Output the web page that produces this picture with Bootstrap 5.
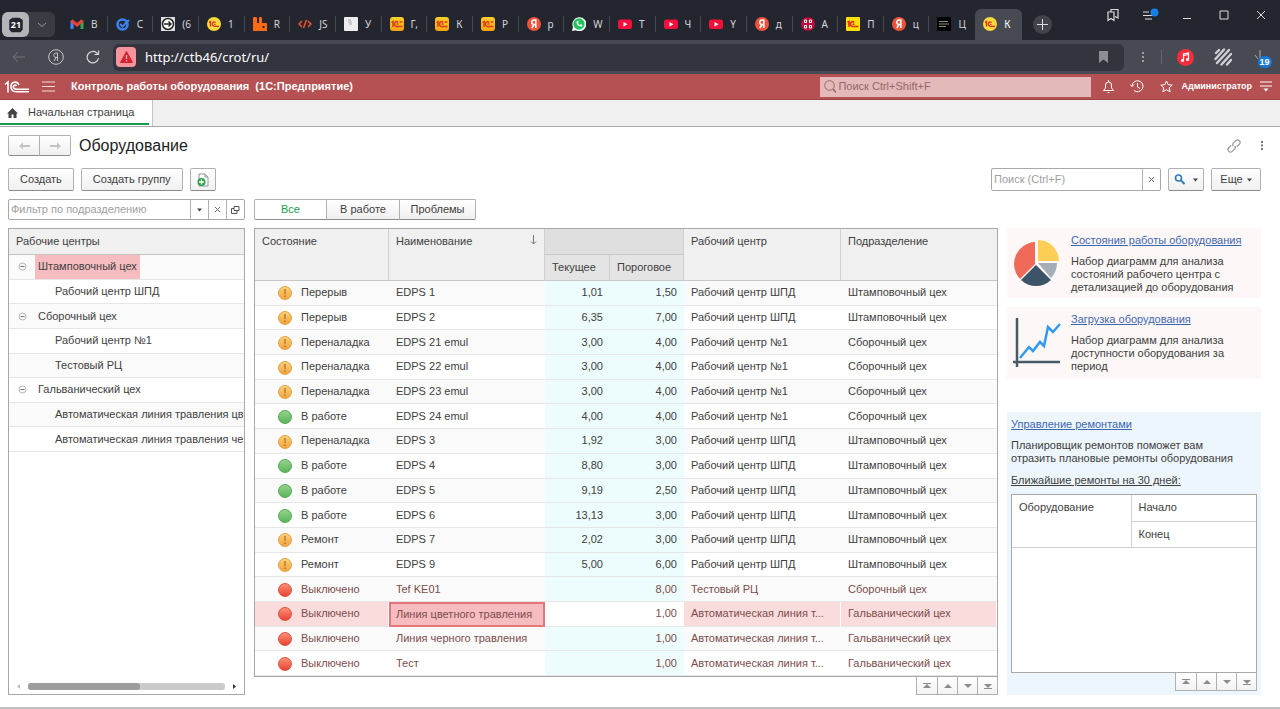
<!DOCTYPE html>
<html lang="ru">
<head>
<meta charset="utf-8">
<meta name="viewport" content="width=device-width, initial-scale=1">
<title>Контроль работы оборудования</title>
<link href="https://cdn.jsdelivr.net/npm/bootstrap@5.3.0/dist/css/bootstrap.min.css" rel="stylesheet">
<style>
body{font-family:"Liberation Sans",Arial,sans-serif;font-size:11px;line-height:13px;color:#404040;background:#fff}
button,input{font:inherit;color:inherit}
svg{display:block;flex:none}
.plain{background:none;border:0;padding:0;display:flex;align-items:center;justify-content:center}
/* browser chrome */
.strip{background:#24262f;height:40px;color:#d5d6da;font-family:"Noto Sans",sans-serif;font-size:10px}
.counter{background:#3a3b43;border-radius:6px;width:53px;height:25px;margin:12px 7px 0 2px}
.counter-num{background:#b4b5b8;border-radius:6px;width:27px;height:25px}
.b-tab{flex:1 1 0;min-width:0;height:16px;margin-top:16px;padding-left:8px;gap:7px;border-right:1px solid #484a53;color:#d5d6da;text-decoration:none}
.b-tab:nth-last-child(2){border-color:transparent}
.b-tab span{white-space:nowrap}
.b-tab.current{flex:0 0 47px;height:31px;margin-top:9px;padding:0 0 1px 8px;background:#484a53;border:0;border-radius:6px 6px 0 0;color:#fff}
.plus{width:19px;height:19px;border-radius:50%;background:#42444c;margin:15px 0 0 11px}
.win{width:186px;margin-left:42px;height:30px}
.win .plain{width:37px}
.addr{background:#484a53;height:34px;padding-right:2px}
.nav-ic{width:37px;height:34px}
.url{background:#33343e;border-radius:6px;height:27px;margin-left:2px;padding-left:3px;color:#fff}
.url input{background:none;border:0;outline:0;color:#fff;padding:0 0 0 9px;font:13px "Noto Sans",sans-serif}
.danger{width:20px;height:20px;border-radius:4px;background:#f5949c}
.dl{position:relative}
.dl b{position:absolute;left:4px;top:6px;background:#1677d8;color:#fff;border-radius:8px;font-size:9px;line-height:12px;padding:0 2px}
/* application header */
.app{background:#b55152;border-bottom:1px solid #9b4546;height:26px;color:#fff}
.user{font-size:9px}
.app-find{background:#e4b9ba;width:271px;height:20px;color:#94686a}
.app-find input{background:none;border:0;outline:0;width:220px;padding:0 0 0 2px}
.app-find input::placeholder{color:#94686a}
.tabs{background:#f0f0f0;border-bottom:1px solid #a8a8a8;height:27px}
.home-tab{background:#fff;border-right:1px solid #c4c4c4;padding-right:3px}
.home-tab a{color:#404040;text-decoration:none;border-bottom:2px solid #179a4c;height:25px;width:149px;padding:2px 0 0 7px;gap:10px}
/* form */
.form{padding:8px 19px 12px 8px}
.btn-1c{--bs-btn-font-size:11px;--bs-btn-line-height:13px;--bs-btn-padding-y:0;--bs-btn-padding-x:11px;--bs-btn-border-radius:2px;--bs-btn-color:#404040;--bs-btn-border-color:#b0b0b0;height:23px;background:linear-gradient(#fff,#f0f0f0);border-bottom-color:#8c8c8c;display:inline-flex;align-items:center;justify-content:center}
.arrows .btn-1c{width:32px;height:21px}
.tools{gap:7px}
.tools .w-add{width:26px}.tools .w-find{width:36px}.tools .w-more{width:50px}.tools .w-search{width:170px}
h1{font-size:16px;line-height:20px;color:#222;margin:0}
.dots{margin-left:18px;margin-right:-4px}
.field{border:1px solid #a8a8a8;border-radius:2px;background:#fff}
.field input{border:0;outline:0;padding:0 0 0 2px;min-width:0;flex:1;background:none}
.field input::placeholder{color:#a0a0a0}
.field .plain{border-left:1px solid #b0b0b0;width:18px}
.cols{display:grid;grid-template-columns:237px minmax(0,1fr) 254px;column-gap:9px}
.seg .btn-1c{height:21px;width:74px;padding:0}
.seg .btn-1c:first-child{width:73px}
.seg .btn-1c:last-child{width:77px}
.seg .btn-1c.on{background:#fff;color:#179a4c}
.frame{border:1px solid #a8a8a8;background:#fff}
.tree{margin:0;padding:0;list-style:none;display:grid;grid-template-rows:repeat(8,1fr);height:197px}
.tree li{display:flex;align-items:center;border-bottom:1px solid #e6e6e6;white-space:nowrap;overflow:hidden;padding-left:46px}
.tree li.group{padding-left:9px;gap:8px}
.tree li:nth-child(odd){background:#fafafa}
.tree .picked{background:#f7bcbf;align-self:stretch;display:flex;align-items:center}
.tree .group span{padding:0 3px}
.tree-head{background:#f0f0f0;border-bottom:1px solid #c4c4c4;height:26px;padding:6px 7px}
.track{height:7px;border-radius:3px;background:#cbcbcb}
.thumb{height:7px;width:57%;border-radius:3px;background:#9d9d9d}
.grid-data{width:100%;table-layout:fixed;border-collapse:separate;border-spacing:0;flex:1}
.c-state{width:134px}.c-name{width:156px}.c-now{width:65px}.c-limit{width:74px}.c-center{width:157px}
.grid-data th{font-weight:400;background:#f0f0f0;border-right:1px solid #d0d0d0;border-bottom:1px solid #c8c8c8;padding:6px 7px;vertical-align:top;height:26px}
.grid-data th:last-child{border-right:0}
.grid-data th.sub{background:#e4e4e4;padding:6px 7px}
.grid-data tr+tr th.sub:last-child{border-right:1px solid #d0d0d0}
.grid-data th.sum{background:#dfdfdf}
.grid-data td{border-bottom:1px solid #e6e6e6;padding:0 7px;height:24px;white-space:nowrap;overflow:hidden}
.grid-data tbody tr:nth-child(odd) td{background:#fafafa}
.grid-data td.num,.grid-data tbody tr:nth-child(odd) td.num{background:#edfdfd;text-align:right}
.grid-data .off td{color:#7c4c4c}
.grid-data tbody tr.sel td{background:#fbdcdd;border-right:1px solid #fff}
.grid-data tbody tr.sel td.num{background:#fff;border-right:0}
.grid-data tbody tr.sel td.cell{background:#f7bcbf;border:2px solid #e27679;padding:0 5px}
.lamp{display:inline-block;width:14px;height:14px;border-radius:50%;margin:-2px 9px -2px 16px;vertical-align:middle;text-align:center;font-weight:700;font-size:10px;line-height:13px;border:1px solid}
.warn{background:linear-gradient(#fcd077,#f2a33c);border-color:#e0a04a;color:#b8742a}
.good{background:linear-gradient(#94d28b,#5bb659);border-color:#55a554}
.bad{background:linear-gradient(#fb9078,#ea4430);border-color:#d45544}
.pager{height:18px}
.pager .plain{width:20px;background:linear-gradient(#fff,#f2f2f2);border:1px solid #b0b0b0;border-top:0;border-left:0}
.pager .plain:first-child{border-left:1px solid #b0b0b0;width:22px}
.tile{background:#fdf8f7;color:#404040}
.tile a,.repair a{color:#3d66b0}
.tile-a{height:70px;padding:6px}
.tile-b{height:72px;padding:6px;margin-top:9px}
.tile p{margin:8px 0 0}
.tile div{padding-left:9px}
.repair{background:#edf6fd;margin-top:33px;padding:6px 4px 4px}
.repair p{margin:8px 16px 9px 0}
.repair u{margin-bottom:7px}
.mini{width:100%;table-layout:fixed}
.mini .c-what{width:119px}
.mini th{font-weight:400;padding:6px 7px;vertical-align:top;border-bottom:1px solid #d0d0d0;height:26px}
.mini th+th,.mini tr+tr th{border-left:1px solid #d0d0d0}
.under{background:#c0c0c0;height:2px}
</style>
</head>
<body class="min-vh-100 d-flex flex-column">
<svg width="0" height="0" class="position-absolute" aria-hidden="true">
<defs><linearGradient id="gold" x2="0" y2="1"><stop stop-color="#fdd02a"/><stop offset="1" stop-color="#f8a313"/></linearGradient></defs>
<symbol id="onec" viewBox="0 0 14 14"><rect width="14" height="14" rx="3" fill="url(#gold)"/><path d="M1.500 5.500l1.500-1v5.500M8 5.500C7 4 4.500 4.500 4.500 7s2 3 3.500 2.500h4.500M8.500 7H6.500M9.500 5h3" fill="none" stroke="#d6401c" stroke-width="1.500"/></symbol>
<symbol id="onec-round" viewBox="0 0 14 14"><circle cx="7" cy="7" r="7" fill="#ffd83a"/><path d="M2 5.500l1.500-1v5M8.300 5.800C7.500 4.300 5.300 4.800 5.300 7s1.700 2.400 3 2.300h3.700M8.500 7.400H7.200" fill="none" stroke="#d6301c" stroke-width="1.300"/></symbol>
<symbol id="ya" viewBox="0 0 14 14"><circle cx="7" cy="7" r="7" fill="#f0533b"/><path d="M8.800 11V3H7.200C3.800 3 4 7.500 7.300 7.500h1.500M7 7.500L4.800 11" fill="none" stroke="#fff" stroke-width="1.500"/></symbol>
<symbol id="yt" viewBox="0 0 14 14"><rect y="2.500" width="14" height="9.500" rx="2.500" fill="#f5103c"/><path d="M5.500 5v4.500l4-2.250z" fill="#fff"/></symbol>
<symbol id="minus" viewBox="0 0 9 9"><circle cx="4.500" cy="4.500" r="3.500" fill="none" stroke="#b4b4b4"/><path d="M2.500 4.500h4" stroke="#777"/></symbol>
<symbol id="p-first" viewBox="0 0 10 8"><path d="M1 1h8v1H1zM5 2l4 4H1z" fill="#8c8c8c"/></symbol>
<symbol id="p-up" viewBox="0 0 10 8"><path d="M5 2l4 4H1z" fill="#8c8c8c"/></symbol>
<symbol id="p-down" viewBox="0 0 10 8"><path d="M5 6l4-4H1z" fill="#8c8c8c"/></symbol>
<symbol id="p-last" viewBox="0 0 10 8"><path d="M5 6l4-4H1zM1 6h8v1H1z" fill="#8c8c8c"/></symbol>
<symbol id="caret" viewBox="0 0 5 4"><path d="M0 .5h5L2.500 3.500z" fill="#444"/></symbol>
</svg>

<header>
<div class="strip d-flex">
<div class="counter d-flex">
<button class="plain counter-num" aria-label="Вкладки"><svg width="18" height="18" viewBox="0 0 16 16"><path d="M5 1.500h6l3 2V12l-2 2.500H4L2 12V3.500z" fill="#24262f"/><text x="8" y="11" text-anchor="middle" font-family="Noto Sans" font-size="8" font-weight="700" fill="#fff">21</text></svg></button>
<button class="plain flex-fill" aria-label="Список вкладок"><svg width="10" height="6" viewBox="0 0 10 6"><path d="M1 1l4 3.500L9 1" fill="none" stroke="#999ba2"/></svg></button>
</div>
<nav class="d-flex flex-fill">
<a href="#" class="b-tab d-flex align-items-center"><svg width="14" height="14" viewBox="0 0 14 14"><path d="M2 12V3.500" stroke="#4285f4" stroke-width="3"/><path d="M12 12V3.500" stroke="#34a853" stroke-width="3"/><path d="M1.500 3.500L7 8l5.500-4.500" fill="none" stroke="#ea4335" stroke-width="3"/></svg><span>В</span></a>
<a href="#" class="b-tab d-flex align-items-center"><svg width="14" height="14" viewBox="0 0 14 14"><circle cx="6.500" cy="7.500" r="5" fill="none" stroke="#3b82f0" stroke-width="2.500"/><path d="M4 7l2.500 2.500L13 3" fill="none" stroke="#3b82f0" stroke-width="2"/></svg><span>С</span></a>
<a href="#" class="b-tab d-flex align-items-center"><svg width="14" height="14" viewBox="0 0 14 14"><rect width="14" height="14" fill="#ddd"/><circle cx="7" cy="7" r="5.500" fill="#fff" stroke="#222" stroke-width="1.500"/><path d="M3 7h7M7.500 4.500L10 7 7.500 9.500" fill="none" stroke="#222" stroke-width="1.400"/></svg><span>(6</span></a>
<a href="#" class="b-tab d-flex align-items-center"><svg width="14" height="14"><use href="#onec-round"/></svg><span>1</span></a>
<a href="#" class="b-tab d-flex align-items-center"><svg width="14" height="14" viewBox="0 0 14 14"><path d="M0 14V1q0-1 1-1h2q1 0 1 1v5h2V1q0-1 1-1h1q1 0 1 1v5h4q1 0 1 1v7z" fill="#ff6a13"/><path d="M9.500 9h2v2h-2z" fill="#24262f"/></svg><span>R</span></a>
<a href="#" class="b-tab d-flex align-items-center"><svg width="14" height="14" viewBox="0 0 14 14"><path d="M4 4L1 7l3 3M10 4l3 3-3 3M8.500 3l-3 8" fill="none" stroke="#f0532d" stroke-width="1.500"/></svg><span>JS</span></a>
<a href="#" class="b-tab d-flex align-items-center"><svg width="14" height="14" viewBox="0 0 14 14"><rect width="14" height="14" rx="1" fill="#eee"/><path d="M4 3h3M4 5h4M5 7h3" stroke="#aaa"/></svg><span>У</span></a>
<a href="#" class="b-tab d-flex align-items-center"><svg width="14" height="14"><use href="#onec"/></svg><span>Г,</span></a>
<a href="#" class="b-tab d-flex align-items-center"><svg width="14" height="14"><use href="#onec"/></svg><span>К</span></a>
<a href="#" class="b-tab d-flex align-items-center"><svg width="14" height="14"><use href="#onec"/></svg><span>Р</span></a>
<a href="#" class="b-tab d-flex align-items-center"><svg width="14" height="14"><use href="#ya"/></svg><span>р</span></a>
<a href="#" class="b-tab d-flex align-items-center"><svg width="14" height="14" viewBox="0 0 14 14"><path d="M0 14l1-4A7 7 0 1 1 4 13.300z" fill="#fff"/><circle cx="7" cy="7" r="5.700" fill="#22c35e"/><path d="M4.500 4.500q0 5 5.500 5l.5-1.500-1.500-.8-1 .8Q6.500 7.500 6 6l.7-1L6 3.500z" fill="#fff"/></svg><span>W</span></a>
<a href="#" class="b-tab d-flex align-items-center"><svg width="14" height="14"><use href="#yt"/></svg><span>Т</span></a>
<a href="#" class="b-tab d-flex align-items-center"><svg width="14" height="14"><use href="#yt"/></svg><span>Ч</span></a>
<a href="#" class="b-tab d-flex align-items-center"><svg width="14" height="14"><use href="#yt"/></svg><span>Y</span></a>
<a href="#" class="b-tab d-flex align-items-center"><svg width="14" height="14"><use href="#ya"/></svg><span>д</span></a>
<a href="#" class="b-tab d-flex align-items-center"><svg width="14" height="14" viewBox="0 0 14 14"><circle cx="7" cy="7" r="7" fill="#b80f3c"/><path d="M3.500 3h2v2.500h-2zM8.500 3h2v2.500h-2zM3.500 8.500h2V11h-2zM8.500 8.500h2V11h-2z" fill="none" stroke="#fff"/></svg><span>А</span></a>
<a href="#" class="b-tab d-flex align-items-center"><svg width="14" height="14" viewBox="0 0 14 14"><rect width="14" height="14" rx="1" fill="#ffe000"/><path d="M1.500 5.500l1.500-1v5.500M8 5.500C7 4 4.500 4.500 4.500 7s2 2.600 3.500 2.500h4.500M8.500 7.200H6.500" fill="none" stroke="#e0301c" stroke-width="1.600"/></svg><span>П</span></a>
<a href="#" class="b-tab d-flex align-items-center"><svg width="14" height="14"><use href="#ya"/></svg><span>ц</span></a>
<a href="#" class="b-tab d-flex align-items-center"><svg width="14" height="14" viewBox="0 0 14 14"><rect width="14" height="14" fill="#000"/><path d="M2 4.500h9M2 7h10M2 9.500h7" stroke="#8b8f80"/></svg><span>Ц</span></a>
<a href="#" class="b-tab current d-flex align-items-center"><svg width="14" height="14"><use href="#onec-round"/></svg><span>К</span></a>
</nav>
<button class="plain plus" aria-label="Новая вкладка"><svg width="11" height="11" viewBox="0 0 11 11"><path d="M5.500 0v11M0 5.500h11" stroke="#ddd"/></svg></button>
<div class="win d-flex">
<button class="plain" aria-label="Коллекции"><svg width="12" height="14" viewBox="0 0 12 14"><path d="M1 4h6v8.500L4 10.500 1 12.500zM4 4V1.500h7V10L8 8.500" fill="none" stroke="#ddd" stroke-width="1.200"/></svg></button>
<button class="plain" aria-label="Меню"><svg width="18" height="14" viewBox="0 0 18 14"><path d="M2 4h6M2 7.500h10M4 11h7" stroke="#ddd"/><circle cx="13.500" cy="4.500" r="4" fill="#1480e8"/></svg></button>
<button class="plain" aria-label="Свернуть"><svg width="10" height="12"><path d="M1 9.500h8" stroke="#ddd"/></svg></button>
<button class="plain" aria-label="Развернуть"><svg width="10" height="10"><path d="M1 1h8v8H1z" fill="none" stroke="#ddd"/></svg></button>
<button class="plain" aria-label="Закрыть"><svg width="10" height="10"><path d="M1 1l8 8M9 1L1 9" stroke="#ddd"/></svg></button>
</div>
</div>
<div class="addr d-flex align-items-center">
<button class="plain nav-ic" aria-label="Назад"><svg width="13" height="12" viewBox="0 0 13 12"><path d="M13 6H1M6 1L1 6l5 5" fill="none" stroke="#73757c"/></svg></button>
<button class="plain nav-ic" aria-label="Яндекс"><svg width="16" height="16" viewBox="0 0 16 16"><circle cx="8" cy="8" r="7.300" fill="none" stroke="#c8c9cc"/><path d="M9.500 12V4H8C5 4 5 8.500 8 8.500h1.500M8 8.500L6 12" fill="none" stroke="#c8c9cc"/></svg></button>
<button class="plain nav-ic" aria-label="Обновить"><svg width="14" height="14" viewBox="0 0 14 14"><path d="M12.500 8A5.700 5.700 0 1 1 10.500 2.800l1.500 1.500M12.500 .5v4h-4" fill="none" stroke="#d5d6da" stroke-width="1.200"/></svg></button>
<div class="url d-flex align-items-center flex-fill">
<span class="danger d-flex align-items-center justify-content-center"><svg width="13" height="12" viewBox="0 0 13 12"><path d="M6.500 0.500L12.500 11.500H.5z" fill="#d8202f" stroke="#d8202f" stroke-linejoin="round"/><path d="M6.500 4v4M6.500 9v1.500" stroke="#f5b4ba" stroke-width="1.300"/></svg></span>
<input class="flex-fill" aria-label="Адрес" value="http://ctb46/crot/ru/">
<svg class="me-3" width="9" height="12"><path d="M0 0h9v12L4.500 8.500 0 12z" fill="#8c8d94"/></svg>
</div>
<button class="plain nav-ic" aria-label="Ещё"><svg width="3" height="12"><path d="M1 1h2v2H1zM1 5h2v2H1zM1 9h2v2H1z" fill="#9c9da3"/></svg></button>
<svg width="2" height="14"><path d="M.5 0v14" stroke="#666870"/></svg>
<button class="plain nav-ic ms-1" aria-label="Музыка"><svg width="17" height="17" viewBox="0 0 17 17"><circle cx="8.500" cy="8.500" r="8.500" fill="#fa2d3c"/><path d="M6.500 11.500V5l5-1v6.500M6.500 6.500l5-1" fill="none" stroke="#fff" stroke-width="1.200"/><circle cx="5.500" cy="11.500" r="1.500" fill="#fff"/><circle cx="10.500" cy="10.500" r="1.500" fill="#fff"/></svg></button>
<button class="plain nav-ic" aria-label="Расширение"><svg width="18" height="18" viewBox="0 0 18 18"><path d="M2 5l3-3M1.500 11L10 1.500M3 15L15 2M7.500 16.500L17 6M13 16.500l4-4.500" stroke="#d0d1d4" stroke-width="2.400" stroke-linecap="round"/></svg></button>
<button class="plain nav-ic" aria-label="Загрузки"><span class="dl"><svg width="12" height="14"><path d="M6 0v8M1 5l3 4" stroke="#aaa" fill="none"/></svg><b>19</b></span></button>
</div>
<div class="app d-flex align-items-center">
<svg class="ms-1" width="26" height="14" viewBox="0 0 26 14"><path d="M1 4.500l3-2.500V12.500M15 5C13 .5 7 1.500 7 6.500s4 5.500 7 5.200h11M12.500 6c-1-1.500-3.200-1-3.200 .8s2 2.500 4.200 2.400H25" fill="none" stroke="#fff" stroke-width="1.600"/></svg>
<button class="plain mx-2 px-1" aria-label="Главное меню"><svg width="13" height="11"><path d="M0 1h13M0 5.500h13M0 10h13" stroke="#f4dcdc" stroke-width="1.200"/></svg></button>
<strong class="flex-fill ps-1">Контроль работы оборудования &nbsp;(1С:Предприятие)</strong>
<label class="app-find d-flex align-items-center"><svg class="ms-1" width="12" height="13" viewBox="0 0 12 13"><circle cx="5.500" cy="5.500" r="4.800" fill="none" stroke="#94686a"/><path d="M9 9l3 3.500" stroke="#94686a" stroke-width="1.500"/></svg><input placeholder="Поиск Ctrl+Shift+F" aria-label="Поиск"></label>
<button class="plain ms-2 px-1" aria-label="Уведомления"><svg width="11" height="13" viewBox="0 0 11 13"><path d="M.5 10.500h10L8.500 8V5q0-3-3-3t-3 3v3zM4.500 12.500h2M5.500 0v2" fill="none" stroke="#fff"/></svg></button>
<button class="plain ms-2 px-1" aria-label="История"><svg width="14" height="13" viewBox="0 0 14 13"><path d="M2 6A5.500 5.500 0 1 1 4 10.500M0 4.500l2 2 2-2M7.500 3v4l2.500 1.500" fill="none" stroke="#fff"/></svg></button>
<button class="plain ms-2 ps-1" aria-label="Избранное"><svg width="13" height="13" viewBox="0 0 13 13"><path d="M6.500 1l1.700 3.700 4 .4-3 2.700.9 4-3.600-2.100-3.600 2.100.9-4-3-2.700 4-.4z" fill="none" stroke="#fff"/></svg></button>
<button class="plain ms-1 ps-1 fw-bold user">Администратор</button>
<button class="plain ms-1 px-1 me-1" aria-label="Настройки"><svg width="12" height="11" viewBox="0 0 12 11"><path d="M0 1h12M0 5h12" stroke="#fff"/><path d="M3.500 7.500h5L6 10.500z" fill="#fff"/></svg></button>
</div>
<nav class="tabs d-flex"><div class="home-tab"><a href="#" class="d-flex align-items-center"><svg width="11" height="10" viewBox="0 0 11 10"><path d="M5.500 0L11 5.500H9.500V10h-3V6.500h-2V10h-3V5.500H0z" fill="#444"/></svg>Начальная страница</a></div></nav>
</header>

<main class="form d-flex flex-column flex-fill">
<div class="d-flex align-items-center">
<div class="btn-group arrows" role="group"><button class="btn btn-1c" aria-label="Назад"><svg width="11" height="8"><path d="M0 4l4-3.500v2.500h7v2H4v2.500z" fill="#c4c4c4"/></svg></button><button class="btn btn-1c" aria-label="Вперёд"><svg width="11" height="8"><path d="M11 4L7 .5v2.500H0v2h7v2.500z" fill="#c4c4c4"/></svg></button></div>
<h1 class="ms-2 flex-fill fw-normal">Оборудование</h1>
<button class="plain" aria-label="Ссылка"><svg width="14" height="14" viewBox="0 0 14 14"><g fill="none" stroke="#999" stroke-width="1.200" transform="rotate(-45 7 7)"><path d="M5.500 4.500H2a2.500 2.500 0 0 0 0 5h3.500q2 0 2-2M8.500 9.500H12a2.500 2.500 0 0 0 0-5H8.500q-2 0-2 2"/></g></svg></button>
<button class="plain dots" aria-label="Действия"><svg width="6" height="11"><path d="M2 1h2v2H2zM2 4.500h2v2H2zM2 8h2v2H2z" fill="#777"/></svg></button>
</div>
<div class="tools d-flex mt-2 pt-1">
<button class="btn btn-1c">Создать</button>
<button class="btn btn-1c">Создать группу</button>
<button class="btn btn-1c px-1 w-add" aria-label="Создать копированием"><svg width="12" height="14" viewBox="0 0 12 14"><path d="M2 1h6l3 3v9H2z" fill="#fff" stroke="#8a9aa0"/><path d="M8 1v3h3" fill="none" stroke="#8a9aa0"/><circle cx="4.500" cy="9" r="4" fill="#2ba143"/><path d="M4.500 6.500v5M2 9h5" stroke="#fff" stroke-width="1.300"/></svg></button>
<div class="field w-search d-flex ms-auto"><input placeholder="Поиск (Ctrl+F)" aria-label="Поиск (Ctrl+F)"><button class="plain" aria-label="Очистить"><svg width="5" height="5"><path d="M0 0l5 5M5 0L0 5" stroke="#666"/></svg></button></div>
<button class="btn btn-1c px-1 w-find" aria-label="Найти"><svg width="11" height="11" viewBox="0 0 11 11"><circle cx="4.500" cy="4" r="3" fill="none" stroke="#2f7cb8" stroke-width="1.600"/><path d="M7 6.500l3.500 3.500" stroke="#2f7cb8" stroke-width="2"/></svg><svg class="ms-2" width="5" height="4"><use href="#caret"/></svg></button>
<button class="btn btn-1c px-1 w-more"><span>Еще</span><svg class="ms-1" width="5" height="4"><use href="#caret"/></svg></button>
</div>
<div class="cols mt-2 mb-2">
<div class="field d-flex"><input placeholder="Фильтр по подразделению" aria-label="Фильтр по подразделению"><button class="plain" aria-label="Выбрать"><svg width="5" height="4"><use href="#caret"/></svg></button><button class="plain" aria-label="Очистить"><svg width="5" height="5"><path d="M0 0l5 5M5 0L0 5" stroke="#666"/></svg></button><button class="plain" aria-label="Открыть"><svg width="9" height="8"><path d="M3 .5h5v4H3zM3 2.500H.5v5H6V5" fill="none" stroke="#555"/></svg></button></div>
<div class="btn-group seg me-auto" role="group"><button class="btn btn-1c on">Все</button><button class="btn btn-1c">В работе</button><button class="btn btn-1c">Проблемы</button></div>
</div>

<div class="cols flex-fill">
<section class="frame d-flex flex-column">
<div class="tree-head">Рабочие центры</div>
<ul class="tree">
<li class="group"><svg width="9" height="9"><use href="#minus"/></svg><span class="picked">Штамповочный цех</span></li>
<li>Рабочий центр ШПД</li>
<li class="group"><svg width="9" height="9"><use href="#minus"/></svg><span>Сборочный цех</span></li>
<li>Рабочий центр №1</li>
<li>Тестовый РЦ</li>
<li class="group"><svg width="9" height="9"><use href="#minus"/></svg><span>Гальванический цех</span></li>
<li>Автоматическая линия травления цв</li>
<li>Автоматическая линия травления че</li>
</ul>
<div class="d-flex align-items-center gap-2 mt-auto px-2 pb-1">
<svg width="3" height="5"><path d="M3 0v5L0 2.500z" fill="#bbb"/></svg><div class="track flex-fill"><div class="thumb"></div></div><svg width="3" height="5"><path d="M0 0v5l3-2.500z" fill="#333"/></svg>
</div>
</section>

<section class="d-flex flex-column">
<div class="frame d-flex flex-column flex-fill">
<table class="grid-data">
<colgroup><col class="c-state"><col class="c-name"><col class="c-now"><col class="c-limit"><col class="c-center"><col></colgroup>
<thead>
<tr><th rowspan="2">Состояние</th><th rowspan="2"><span class="d-flex justify-content-between">Наименование<svg width="7" height="10"><path d="M3.500 0v9M1 6.500L3.500 9 6 6.500" fill="none" stroke="#777"/></svg></span></th><th colspan="2" class="sum"></th><th rowspan="2">Рабочий центр</th><th rowspan="2">Подразделение</th></tr>
<tr><th class="sub">Текущее</th><th class="sub">Пороговое</th></tr>
</thead>
<tbody>
<tr><td><i class="lamp warn fst-normal">!</i>Перерыв</td><td>EDPS 1</td><td class="num">1,01</td><td class="num">1,50</td><td>Рабочий центр ШПД</td><td>Штамповочный цех</td></tr>
<tr><td><i class="lamp warn fst-normal">!</i>Перерыв</td><td>EDPS 2</td><td class="num">6,35</td><td class="num">7,00</td><td>Рабочий центр ШПД</td><td>Штамповочный цех</td></tr>
<tr><td><i class="lamp warn fst-normal">!</i>Переналадка</td><td>EDPS 21 emul</td><td class="num">3,00</td><td class="num">4,00</td><td>Рабочий центр №1</td><td>Сборочный цех</td></tr>
<tr><td><i class="lamp warn fst-normal">!</i>Переналадка</td><td>EDPS 22 emul</td><td class="num">3,00</td><td class="num">4,00</td><td>Рабочий центр №1</td><td>Сборочный цех</td></tr>
<tr><td><i class="lamp warn fst-normal">!</i>Переналадка</td><td>EDPS 23 emul</td><td class="num">3,00</td><td class="num">4,00</td><td>Рабочий центр №1</td><td>Сборочный цех</td></tr>
<tr><td><i class="lamp good"></i>В работе</td><td>EDPS 24 emul</td><td class="num">4,00</td><td class="num">4,00</td><td>Рабочий центр №1</td><td>Сборочный цех</td></tr>
<tr><td><i class="lamp warn fst-normal">!</i>Переналадка</td><td>EDPS 3</td><td class="num">1,92</td><td class="num">3,00</td><td>Рабочий центр ШПД</td><td>Штамповочный цех</td></tr>
<tr><td><i class="lamp good"></i>В работе</td><td>EDPS 4</td><td class="num">8,80</td><td class="num">3,00</td><td>Рабочий центр ШПД</td><td>Штамповочный цех</td></tr>
<tr><td><i class="lamp good"></i>В работе</td><td>EDPS 5</td><td class="num">9,19</td><td class="num">2,50</td><td>Рабочий центр ШПД</td><td>Штамповочный цех</td></tr>
<tr><td><i class="lamp good"></i>В работе</td><td>EDPS 6</td><td class="num">13,13</td><td class="num">3,00</td><td>Рабочий центр ШПД</td><td>Штамповочный цех</td></tr>
<tr><td><i class="lamp warn fst-normal">!</i>Ремонт</td><td>EDPS 7</td><td class="num">2,02</td><td class="num">3,00</td><td>Рабочий центр ШПД</td><td>Штамповочный цех</td></tr>
<tr><td><i class="lamp warn fst-normal">!</i>Ремонт</td><td>EDPS 9</td><td class="num">5,00</td><td class="num">6,00</td><td>Рабочий центр ШПД</td><td>Штамповочный цех</td></tr>
<tr class="off"><td><i class="lamp bad"></i>Выключено</td><td>Tef KE01</td><td class="num"></td><td class="num">8,00</td><td>Тестовый РЦ</td><td>Сборочный цех</td></tr>
<tr class="off sel"><td><i class="lamp bad"></i>Выключено</td><td class="cell">Линия цветного травления</td><td class="num"></td><td class="num">1,00</td><td>Автоматическая линия т...</td><td>Гальванический цех</td></tr>
<tr class="off"><td><i class="lamp bad"></i>Выключено</td><td>Линия черного травления</td><td class="num"></td><td class="num">1,00</td><td>Автоматическая линия т...</td><td>Гальванический цех</td></tr>
<tr class="off"><td><i class="lamp bad"></i>Выключено</td><td>Тест</td><td class="num"></td><td class="num">1,00</td><td>Автоматическая линия т...</td><td>Гальванический цех</td></tr>
</tbody>
</table>
</div>
<div class="pager d-flex ms-auto"><button class="plain" aria-label="В начало"><svg width="10" height="8"><use href="#p-first"/></svg></button><button class="plain" aria-label="Вверх"><svg width="10" height="8"><use href="#p-up"/></svg></button><button class="plain" aria-label="Вниз"><svg width="10" height="8"><use href="#p-down"/></svg></button><button class="plain" aria-label="В конец"><svg width="10" height="8"><use href="#p-last"/></svg></button></div>
</section>

<aside class="d-flex flex-column">
<section class="tile tile-a d-flex">
<svg class="mt-1" width="49" height="50" viewBox="0 0 49 50"><path d="M22 26V4A22 22 0 0 0 7 41z" fill="#ef6a58"/><path d="M23 27L8 42a22 22 0 0 0 30 0z" fill="#3d5468"/><path d="M25 25h19a22 22 0 0 1-6 15z" fill="#a5adb8"/><path d="M25 23V2a21 21 0 0 1 21 21z" fill="#fdce55"/></svg>
<div><a href="#">Состояния работы оборудования</a><p>Набор диаграмм для анализа состояний рабочего центра с детализацией до оборудования</p></div>
</section>
<section class="tile tile-b d-flex">
<svg class="mt-1" width="49" height="50" viewBox="0 0 49 50"><path d="M4 1v49M0 45h47" stroke="#475a66" stroke-width="2.500"/><path d="M7 41l9-11 4 4 7-9 4 4 4-19 5 5 7-8" fill="none" stroke="#3399ee" stroke-width="2.500"/></svg>
<div><a href="#">Загрузка оборудования</a><p>Набор диаграмм для анализа доступности оборудования за период</p></div>
</section>
<section class="repair d-flex flex-column flex-fill">
<a href="#">Управление ремонтами</a>
<p>Планировщик ремонтов поможет вам отразить плановые ремонты оборудования</p>
<u>Ближайшие ремонты на 30 дней:</u>
<div class="frame flex-fill">
<table class="mini"><colgroup><col class="c-what"><col></colgroup><thead><tr><th rowspan="2">Оборудование</th><th>Начало</th></tr><tr><th>Конец</th></tr></thead></table>
</div>
<div class="pager d-flex ms-auto"><button class="plain" aria-label="В начало"><svg width="10" height="8"><use href="#p-first"/></svg></button><button class="plain" aria-label="Вверх"><svg width="10" height="8"><use href="#p-up"/></svg></button><button class="plain" aria-label="Вниз"><svg width="10" height="8"><use href="#p-down"/></svg></button><button class="plain" aria-label="В конец"><svg width="10" height="8"><use href="#p-last"/></svg></button></div>
</section>
</aside>
</div>
</main>
<footer class="under"></footer>
<script src="https://cdn.jsdelivr.net/npm/bootstrap@5.3.0/dist/js/bootstrap.bundle.min.js"></script>
</body>
</html>
